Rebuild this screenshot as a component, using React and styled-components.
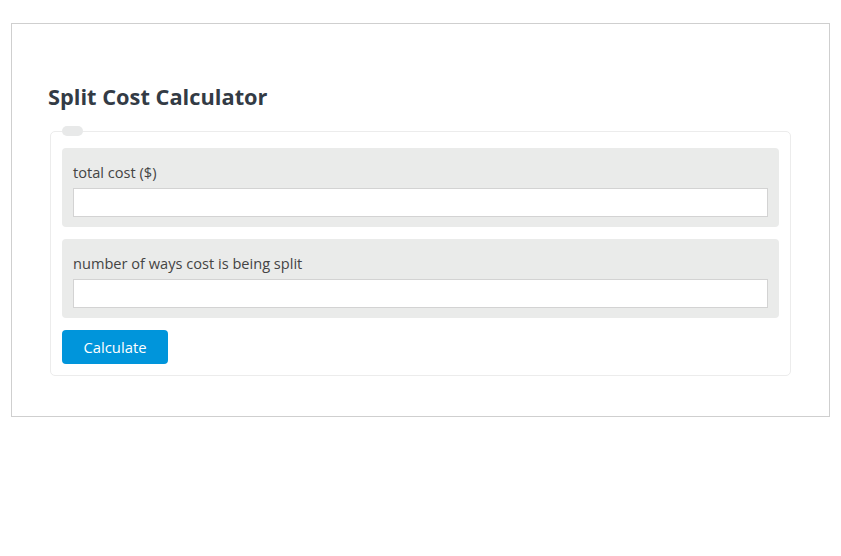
import React from "react";
import styled, { createGlobalStyle } from "styled-components";

const GlobalStyle = createGlobalStyle`
  html, body {
    margin: 0;
    padding: 0;
    background: #fff;
    font-family: "Open Sans", "Noto Sans", sans-serif;
  }
`;

const Page = styled.div`
  padding: 23px 11px 0 11px;
  width: 819px;
`;

const Card = styled.div`
  border: 1px solid #cfcfcf;
  padding: 58px 38px 40px 36px;
`;

const Title = styled.h2`
  margin: 0 0 19px 0;
  font-size: 21.8px;
  font-weight: 700;
  color: #333b45;
  line-height: 30px;
`;

const Form = styled.fieldset`
  position: relative;
  margin: 0 0 0 2px;
  padding: 16px 11px 11px 11px;
  border: 1px solid #ececec;
  border-radius: 5px;
`;

const Pill = styled.span`
  position: absolute;
  top: -6px;
  left: 11px;
  width: 21px;
  height: 10px;
  border-radius: 5px;
  background: #e8e9e9;
`;

const Group = styled.div`
  background: #eaebea;
  border-radius: 4px;
  padding: 14px 11px 10px 11px;
  margin-bottom: 12px;
`;

const Label = styled.label`
  display: block;
  font-size: 14.6px;
  color: #444;
  line-height: 20px;
  margin-bottom: 6px;
`;

const Input = styled.input`
  display: block;
  box-sizing: border-box;
  width: 100%;
  height: 29px;
  border: 1px solid #d3d3d3;
  background: #fff;
  outline: none;
`;

const Button = styled.button`
  display: block;
  width: 106px;
  height: 34px;
  border: none;
  border-radius: 4px;
  background: #0095db;
  color: #fff;
  font-family: inherit;
  font-size: 14.8px;
`;

export default function App() {
  return (
    <Page>
      <GlobalStyle />
      <Card>
        <Title>Split Cost Calculator</Title>
        <Form>
          <Pill />
          <Group>
            <Label>total cost ($)</Label>
            <Input />
          </Group>
          <Group>
            <Label>number of ways cost is being split</Label>
            <Input />
          </Group>
          <Button>Calculate</Button>
        </Form>
      </Card>
    </Page>
  );
}
